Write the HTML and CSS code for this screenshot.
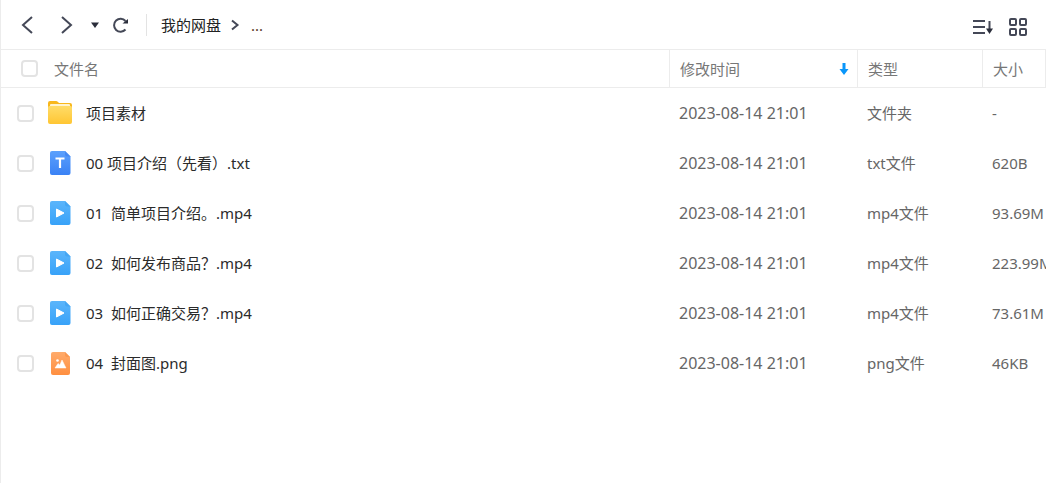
FILE: index.html
```html
<!DOCTYPE html>
<html lang="zh-CN">
<head>
  <meta charset="utf-8">
  <title>我的网盘</title>
  <link rel="stylesheet" href="styles.css">
</head>
<body>

<!-- shared icons -->
<svg class="sprite" aria-hidden="true">
  <defs>
    <linearGradient id="blue" x1="0" y1="0" x2="0" y2="1">
      <stop offset="0" stop-color="#5ba0fc"/><stop offset="1" stop-color="#3a82f5"/>
    </linearGradient>
    <linearGradient id="sky" x1="0" y1="0" x2="0" y2="1">
      <stop offset="0" stop-color="#5bb5fb"/><stop offset="1" stop-color="#38a2f8"/>
    </linearGradient>
    <linearGradient id="orange" x1="0" y1="0" x2="0" y2="1">
      <stop offset="0" stop-color="#ffab6b"/><stop offset="1" stop-color="#ff8f40"/>
    </linearGradient>
    <linearGradient id="yellow" x1="0" y1="0" x2="0" y2="1">
      <stop offset="0" stop-color="#ffdc68"/><stop offset="1" stop-color="#ffc633"/>
    </linearGradient>
  </defs>
  <symbol id="folder" viewBox="0 0 26 26">
    <path d="M1 3q0-2 2-2h6q1 0 2 1l1 1h11q2 0 2 2v6H1z" fill="#f8b71c"/>
    <rect x="3" y="4" width="20" height="5" rx="1" fill="#fff3cf"/>
    <path d="M1 7.500q0-1.500 1.500-1.500h21q1.500 0 1.500 1.500V22q0 2-2 2H3q-2 0-2-2z" fill="url(#yellow)"/>
  </symbol>
  <symbol id="txt" viewBox="0 0 26 26">
    <path d="M3 3q0-2 2-2h13l5.500 5.500V23q0 2-2 2H5q-2 0-2-2z" fill="url(#blue)"/>
    <path d="M18 1v3.500q0 2 2 2h3.500z" fill="#4589f2"/>
    <path d="M8.500 8.500h9M13 8.500V18" fill="none" stroke="#fff" stroke-width="2.200"/>
  </symbol>
  <symbol id="video" viewBox="0 0 26 26">
    <path d="M3 3q0-2 2-2h13l5.500 5.500V23q0 2-2 2H5q-2 0-2-2z" fill="url(#sky)"/>
    <path d="M18 1v3.500q0 2 2 2h3.500z" fill="#45a6f3"/>
    <path d="M9.500 9v8l7.500-4z" fill="#fff" stroke="#fff" stroke-linejoin="round"/>
  </symbol>
  <symbol id="image" viewBox="0 0 26 26">
    <path d="M4 4q0-2 2-2h12l5 5v16q0 2-2 2H6q-2 0-2-2z" fill="url(#orange)"/>
    <path d="M18 2v3q0 2 2 2h3z" fill="#fa9850"/>
    <circle cx="10.500" cy="10.500" r="1.300" fill="#fff"/>
    <path d="M8 18l3-4.500 1.800 1.500L15 10l4 8z" fill="#fff" stroke="#fff" stroke-width=".5" stroke-linejoin="round"/>
  </symbol>
</svg>

<div class="disk">
  <header class="toolbar">
    <button type="button" class="nav" aria-label="后退">
      <svg width="20" height="20" viewBox="0 0 20 20"><path d="M15 2L6 10l9 8"/></svg>
    </button>
    <button type="button" class="nav" aria-label="前进">
      <svg width="20" height="20" viewBox="0 0 20 20"><path d="M5 2l9 8-9 8"/></svg>
    </button>
    <button type="button" class="caret" aria-label="历史记录">
      <svg width="8" height="20" viewBox="0 0 8 20"><path d="M0 7.500h8L4 13z"/></svg>
    </button>
    <button type="button" class="nav refresh" aria-label="刷新">
      <svg width="20" height="20" viewBox="0 0 20 20">
        <path d="M14.500 6A6.500 6.500 0 1 0 14.500 14.500"/>
        <path class="solid" d="M11.500 8.500h5.500V4z"/>
      </svg>
    </button>
    <nav class="path">
      <a href="#">我的网盘</a>
      <svg width="10" height="12" viewBox="0 0 10 12"><path d="M2 1.500L7.500 6 2 10.500"/></svg>
      <a href="#" class="more">...</a>
    </nav>
    <div class="views">
      <button type="button" aria-label="排序">
        <svg width="20" height="20" viewBox="0 0 20 20">
          <path d="M0 4h12M0 10h12M0 16h12M16.500 4v8"/>
          <path class="solid" d="M13 11.500h7L16.500 17z"/>
        </svg>
      </button>
      <button type="button" aria-label="网格视图">
        <svg width="20" height="20" viewBox="0 0 20 20">
          <rect x="2" y="2" width="6" height="6" rx="1"/><rect x="12" y="2" width="6" height="6" rx="1"/>
          <rect x="2" y="12" width="6" height="6" rx="1"/><rect x="12" y="12" width="6" height="6" rx="1"/>
        </svg>
      </button>
    </div>
  </header>

  <table class="files">
    <colgroup>
      <col>
      <col class="col-time">
      <col class="col-type">
      <col class="col-size">
    </colgroup>
    <thead>
      <tr>
        <th><div class="head-name"><input type="checkbox" aria-label="全选"><span>文件名</span></div></th>
        <th>
          <div class="sort">
            <span>修改时间</span>
            <svg width="10" height="12" viewBox="0 0 10 12"><path d="M3.500 0h3v6H9.500L5 12 .5 6h3z"/></svg>
          </div>
        </th>
        <th>类型</th>
        <th>大小</th>
      </tr>
    </thead>
    <tbody>
      <tr>
        <td><div class="name"><input type="checkbox" id="f1"><svg class="icon"><use href="#folder"/></svg><label for="f1">项目素材</label></div></td>
        <td class="time">2023-08-14 21:01</td>
        <td>文件夹</td>
        <td>-</td>
      </tr>
      <tr>
        <td><div class="name"><input type="checkbox" id="f2"><svg class="icon"><use href="#txt"/></svg><label for="f2">00 项目介绍（先看）.txt</label></div></td>
        <td class="time">2023-08-14 21:01</td>
        <td>txt文件</td>
        <td>620B</td>
      </tr>
      <tr>
        <td><div class="name"><input type="checkbox" id="f3"><svg class="icon"><use href="#video"/></svg><label for="f3">01  简单项目介绍。.mp4</label></div></td>
        <td class="time">2023-08-14 21:01</td>
        <td>mp4文件</td>
        <td>93.69M</td>
      </tr>
      <tr>
        <td><div class="name"><input type="checkbox" id="f4"><svg class="icon"><use href="#video"/></svg><label for="f4">02  如何发布商品？.mp4</label></div></td>
        <td class="time">2023-08-14 21:01</td>
        <td>mp4文件</td>
        <td>223.99M</td>
      </tr>
      <tr>
        <td><div class="name"><input type="checkbox" id="f5"><svg class="icon"><use href="#video"/></svg><label for="f5">03  如何正确交易？.mp4</label></div></td>
        <td class="time">2023-08-14 21:01</td>
        <td>mp4文件</td>
        <td>73.61M</td>
      </tr>
      <tr>
        <td><div class="name"><input type="checkbox" id="f6"><svg class="icon"><use href="#image"/></svg><label for="f6">04  封面图.png</label></div></td>
        <td class="time">2023-08-14 21:01</td>
        <td>png文件</td>
        <td>46KB</td>
      </tr>
    </tbody>
  </table>
</div>

</body>
</html>
```
FILE: styles.css
```css
* {
  box-sizing: border-box;
}
body {
  margin: 0;
  background: #fff;
  color: #666;
  font-family: "Noto Sans", "Noto Sans CJK SC", sans-serif;
  font-size: 15px;
  line-height: 20px;
}
.sprite {
  position: absolute;
  width: 0;
  height: 0;
}
.disk {
  min-height: 100vh;
  border-left: 1px solid #ececec;
  overflow: hidden;
}
button {
  display: flex;
  padding: 0;
  border: none;
  background: none;
  cursor: pointer;
}
svg {
  flex: none;
}

/* toolbar */
.toolbar {
  display: flex;
  align-items: center;
  height: 49px;
  padding: 0 18px 0 16px;
}
.toolbar svg {
  fill: none;
  stroke: #444857;
  stroke-width: 2;
}
.toolbar .solid,
.caret svg {
  fill: #2b2e3b;
  stroke: none;
}
.nav {
  margin-right: 20px;
}
.caret {
  margin-left: -6px;
  margin-right: 12px;
}
.refresh {
  margin-right: 15px;
}
.path {
  display: flex;
  align-items: center;
  gap: 9px;
  height: 22px;
  padding-left: 14px;
  border-left: 1px solid #e3e3e3;
}
.path a {
  color: #222;
  text-decoration: none;
}
.path .more {
  padding-left: 2px;
  color: #5c3b28;
}
.views {
  display: flex;
  gap: 15px;
  margin-left: auto;
  padding-top: 5px;
}

/* file list */
.files {
  width: 100%;
  table-layout: fixed;
  border-collapse: separate;
  border-spacing: 0;
}
.col-time {
  width: 188px;
}
.col-type {
  width: 125px;
}
.col-size {
  width: 64px;
}
th {
  height: 39px;
  padding: 0 8px 0 10px;
  border: solid #ececec;
  border-width: 1px 0 1px 1px;
  color: #777;
  font-weight: normal;
  text-align: left;
}
th:first-child {
  border-left: none;
}
th:last-child {
  border-right: 1px solid #ececec;
}
td {
  height: 50px;
  padding: 0 0 0 10px;
  white-space: pre;
}
th:first-child,
td:first-child {
  padding-left: 16px;
}
.time {
  font-size: 16px;
}
.head-name,
.name,
.sort {
  display: flex;
  align-items: center;
}
.head-name {
  gap: 16px;
  padding-left: 4px;
}
.sort {
  justify-content: space-between;
}
.sort svg {
  fill: #0a96fa;
}
.icon {
  width: 26px;
  height: 26px;
  margin: 0 13px;
}
.name label {
  color: #2b2b2b;
}
input[type="checkbox"] {
  appearance: none;
  flex: none;
  width: 17px;
  height: 17px;
  margin: 0;
  border: 2px solid #e3e3e3;
  border-radius: 4px;
}
input[type="checkbox"]:checked {
  background: #0a96fa;
  border-color: #0a96fa;
}
```
